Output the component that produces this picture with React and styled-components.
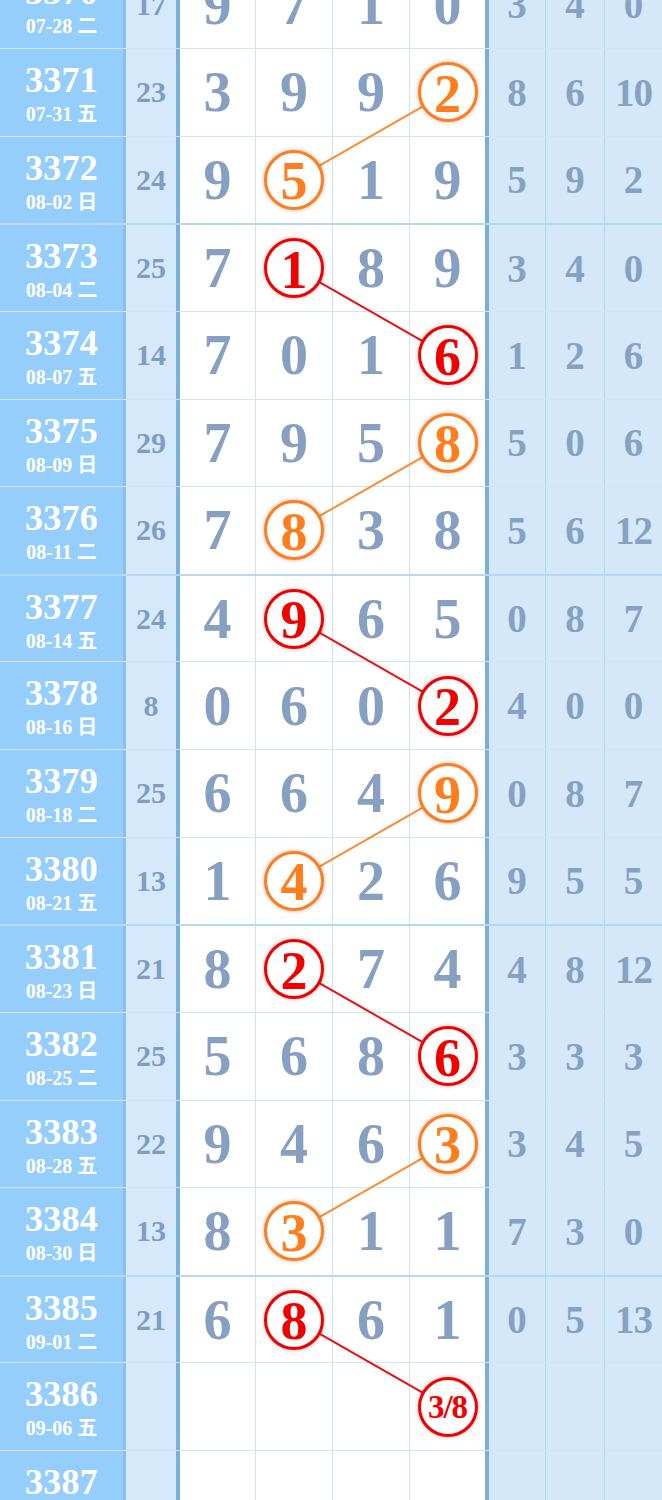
import React from "react";
import styled, { createGlobalStyle } from "styled-components";

const H = 87.625;
const TOP = -38.6;
const COLS = [126, 54, 76, 77, 77, 79, 57, 59, 57];
const COL_CENTER = [294, 447.5];

const Global = createGlobalStyle`
  html, body { margin: 0; padding: 0; background: #ffffff; overflow: hidden; }
  body { font-family: "Liberation Serif", "Noto Sans CJK SC", serif; }
`;

const rows = [
  ["3370", "07-28 二", 17, [9, 7, 1, 0], null, [3, 4, 0], false],
  ["3371", "07-31 五", 23, [3, 9, 9, 2], [3, "o"], [8, 6, 10], false],
  ["3372", "08-02 日", 24, [9, 5, 1, 9], [1, "o"], [5, 9, 2], false],
  ["3373", "08-04 二", 25, [7, 1, 8, 9], [1, "r"], [3, 4, 0], true],
  ["3374", "08-07 五", 14, [7, 0, 1, 6], [3, "r"], [1, 2, 6], false],
  ["3375", "08-09 日", 29, [7, 9, 5, 8], [3, "o"], [5, 0, 6], false],
  ["3376", "08-11 二", 26, [7, 8, 3, 8], [1, "o"], [5, 6, 12], false],
  ["3377", "08-14 五", 24, [4, 9, 6, 5], [1, "r"], [0, 8, 7], true],
  ["3378", "08-16 日", 8, [0, 6, 0, 2], [3, "r"], [4, 0, 0], false],
  ["3379", "08-18 二", 25, [6, 6, 4, 9], [3, "o"], [0, 8, 7], false],
  ["3380", "08-21 五", 13, [1, 4, 2, 6], [1, "o"], [9, 5, 5], false],
  ["3381", "08-23 日", 21, [8, 2, 7, 4], [1, "r"], [4, 8, 12], true],
  ["3382", "08-25 二", 25, [5, 6, 8, 6], [3, "r"], [3, 3, 3], false],
  ["3383", "08-28 五", 22, [9, 4, 6, 3], [3, "o"], [3, 4, 5], false],
  ["3384", "08-30 日", 13, [8, 3, 1, 1], [1, "o"], [7, 3, 0], false],
  ["3385", "09-01 二", 21, [6, 8, 6, 1], [1, "r"], [0, 5, 13], true],
  ["3386", "09-06 五", "", ["", "", "", "3/8"], [3, "r"], ["", "", ""], false],
  ["3387", "09-08 日", "", ["", "", "", ""], null, ["", "", ""], false],
];

const COLORS = { o: "#ff7d1c", r: "#f20000" };
const LINE_COLORS = { o: "#ff8a2e", r: "#ea0f0f" };

const Table = styled.div`
  position: relative;
  width: 662px;
  margin-top: ${TOP}px;
`;

const Row = styled.div`
  display: grid;
  grid-template-columns: ${COLS.map((c) => c + "px").join(" ")};
  box-sizing: border-box;
  border-bottom: 1px solid #cfe5f4;
  border-top: ${(p) => (p.$group ? "2px solid #b4d9f0" : "0")};
  margin-top: ${(p) => (p.$group ? "-1px" : "0")};
  height: ${(p) => (p.$group ? H + 1 : H)}px;
`;

const IssueCell = styled.div`
  background: #95cefb;
  border-right: 3px solid #86c2ef;
  box-sizing: border-box;
  display: flex;
  flex-direction: column;
  align-items: center;
  justify-content: flex-start;
  padding-top: 14px;
  color: #ffffff;
  font-weight: bold;
`;

const IssueNo = styled.div`
  font-size: 36px;
  line-height: 34px;
  letter-spacing: 0.3px;
`;

const IssueDate = styled.div`
  font-size: 20px;
  line-height: 22px;
  margin-top: 6px;
  font-family: "Liberation Serif", "Noto Sans CJK SC", serif;
`;

const SumCell = styled.div`
  background: #d6e9fa;
  border-right: 4px solid #7bb1d8;
  box-sizing: border-box;
  display: flex;
  align-items: center;
  justify-content: center;
  color: #809cc0;
  font-weight: bold;
  font-size: 30px;
`;

const NumCell = styled.div`
  background: #ffffff;
  border-right: ${(p) => (p.$last ? "4px solid #7bb1d8" : "1px solid #cbe4f4")};
  box-sizing: border-box;
  display: flex;
  align-items: center;
  justify-content: center;
  color: #87a0c2;
  font-weight: bold;
  font-size: 56px;
`;

const SideCell = styled.div`
  background: #d5e8f9;
  border-right: 1px solid #b6d8ee;
  box-sizing: border-box;
  display: flex;
  align-items: center;
  justify-content: center;
  color: #87a1c3;
  font-weight: bold;
  font-size: 39px;
  letter-spacing: ${(p) => (p.$wide ? "-1px" : "0")};
  &:last-child { border-right: 0; }
`;

const Ball = styled.div`
  position: relative;
  z-index: 2;
  width: 60px;
  height: 60px;
  box-sizing: border-box;
  border-radius: 50%;
  background: #ffffff;
  border: 3px solid ${(p) => COLORS[p.$tone]};
  box-shadow: 0 0 4px rgba(60, 40, 20, 0.35);
  color: ${(p) => COLORS[p.$tone]};
  display: flex;
  align-items: center;
  justify-content: center;
  font-weight: bold;
  font-size: ${(p) => (p.$small ? "33px" : "54px")};
  letter-spacing: ${(p) => (p.$small ? "-1px" : "0")};
  line-height: 1;
  padding-top: ${(p) => (p.$small ? "1px" : "3px")};
`;

const Links = styled.svg`
  position: absolute;
  left: 0;
  top: 0;
  z-index: 1;
  pointer-events: none;
`;

function rowCenter(i) {
  return i * H + H / 2;
}

export default function App() {
  const segments = [];
  for (let i = 1; i < rows.length - 1; i += 2) {
    const a = rows[i][4];
    const b = rows[i + 1][4];
    if (!a || !b) continue;
    segments.push({
      x1: a[0] === 1 ? COL_CENTER[0] : COL_CENTER[1],
      y1: rowCenter(i),
      x2: b[0] === 1 ? COL_CENTER[0] : COL_CENTER[1],
      y2: rowCenter(i + 1),
      c: LINE_COLORS[a[1]],
    });
  }
  const totalH = rows.length * H;
  return (
    <>
      <Global />
      <Table>
        <Links width="662" height={totalH} viewBox={`0 0 662 ${totalH}`}>
          {segments.map((s, k) => (
            <line key={k} x1={s.x1} y1={s.y1} x2={s.x2} y2={s.y2} stroke={s.c} strokeWidth="2" />
          ))}
        </Links>
        {rows.map(([id, date, sum, nums, hit, side, group]) => (
          <Row key={id} $group={group}>
            <IssueCell>
              <IssueNo>{id}</IssueNo>
              <IssueDate>{date}</IssueDate>
            </IssueCell>
            <SumCell>{sum}</SumCell>
            {nums.map((n, j) => (
              <NumCell key={j} $last={j === 3}>
                {hit && hit[0] === j ? (
                  <Ball $tone={hit[1]} $small={String(n).length > 1}>
                    {n}
                  </Ball>
                ) : (
                  n
                )}
              </NumCell>
            ))}
            {side.map((n, j) => (
              <SideCell key={j} $wide={String(n).length > 1}>
                {n}
              </SideCell>
            ))}
          </Row>
        ))}
      </Table>
    </>
  );
}
